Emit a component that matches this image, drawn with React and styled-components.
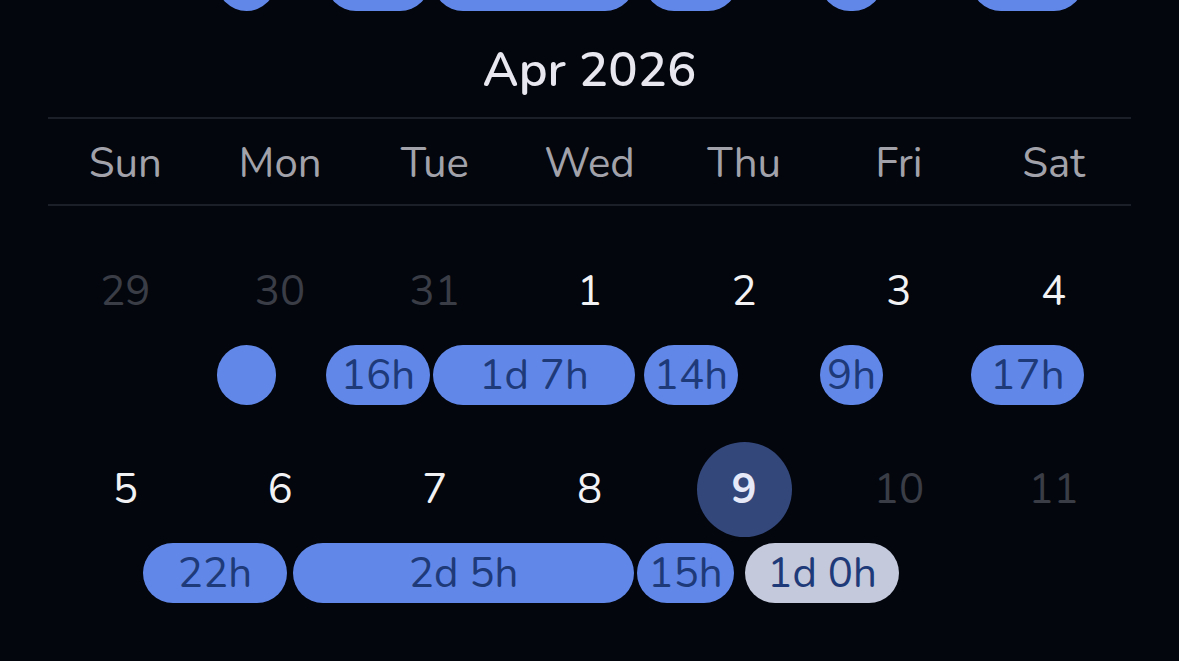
import styled, { createGlobalStyle } from 'styled-components';

const GlobalStyle = createGlobalStyle`
  html, body {
    margin: 0;
    padding: 0;
    background: #03060d;
    overflow: hidden;
  }
  body {
    font-family: "Nunito", "Lato", "Noto Sans", sans-serif;
  }
`;

const weekdays = ['Sun', 'Mon', 'Tue', 'Wed', 'Thu', 'Fri', 'Sat'];

// bar positions are in day units from the start of the week
// the last week of March only peeks in at the top, labels are out of view
const prevBars = [
  { start: 1.092, end: 1.474 },
  { start: 1.797, end: 2.469 },
  { start: 2.489, end: 3.794 },
  { start: 3.852, end: 4.46 },
  { start: 4.99, end: 5.397 },
  { start: 5.966, end: 6.696 },
];

const weeks = [
  {
    days: [
      { n: 29, faded: true },
      { n: 30, faded: true },
      { n: 31, faded: true },
      { n: 1 },
      { n: 2 },
      { n: 3 },
      { n: 4 },
    ],
    bars: [
      { start: 1.092, end: 1.474, label: '' },
      { start: 1.797, end: 2.469, label: '16h' },
      { start: 2.489, end: 3.794, label: '1d 7h' },
      { start: 3.852, end: 4.46, label: '14h' },
      { start: 4.99, end: 5.397, label: '9h' },
      { start: 5.966, end: 6.696, label: '17h' },
    ],
  },
  {
    days: [
      { n: 5 },
      { n: 6 },
      { n: 7 },
      { n: 8 },
      { n: 9, selected: true },
      { n: 10, faded: true },
      { n: 11, faded: true },
    ],
    bars: [
      { start: 0.614, end: 1.545, label: '22h' },
      { start: 1.584, end: 3.788, label: '2d 5h' },
      { start: 3.807, end: 4.434, label: '15h' },
      { start: 4.505, end: 5.501, label: '1d 0h', current: true },
    ],
  },
];

function BarTrack({ bars, ...rest }) {
  return (
    <Track {...rest}>
      {bars.map((b, i) => (
        <Bar
          key={i}
          $current={b.current}
          style={{ left: `${(b.start / 7) * 100}%`, width: `${((b.end - b.start) / 7) * 100}%` }}
        >
          {b.label}
        </Bar>
      ))}
    </Track>
  );
}

function App() {
  return (
    <>
      <GlobalStyle />
      <Page>
        <PrevTrack bars={prevBars} />
        <Title>Apr 2026</Title>
        <Divider $gap={17} />
        <WeekdayRow>
          {weekdays.map((d) => (
            <Weekday key={d}>{d}</Weekday>
          ))}
        </WeekdayRow>
        <Divider />
        <Weeks>
          {weeks.map((w, i) => (
            <Week key={i}>
              <DayRow>
                {w.days.map((d) => (
                  <DayCell key={d.n}>
                    <DayNum $faded={d.faded} $selected={d.selected}>
                      {d.n}
                    </DayNum>
                  </DayCell>
                ))}
              </DayRow>
              <BarTrack bars={w.bars} />
            </Week>
          ))}
        </Weeks>
      </Page>
    </>
  );
}

const Page = styled.div`
  display: flex;
  flex-direction: column;
  padding: 0 48px;
  height: 661px;
  box-sizing: border-box;
`;

const Track = styled.div`
  position: relative;
  height: 60px;
`;

const PrevTrack = styled(BarTrack)`
  margin-top: -49px;
  flex-shrink: 0;
`;

const Bar = styled.div`
  position: absolute;
  top: 0;
  height: 60px;
  border-radius: 30px;
  background: ${(p) => (p.$current ? '#c4c9db' : '#6188e9')};
  color: #1f3a78;
  display: flex;
  align-items: center;
  justify-content: center;
  font-size: 42px;
  white-space: nowrap;
  overflow: hidden;
`;

const Title = styled.h1`
  margin: 29px 0 0;
  height: 60px;
  line-height: 60px;
  text-align: center;
  font-size: 49px;
  font-weight: 600;
  color: #e8e6ee;
`;

const Divider = styled.div`
  height: 2px;
  margin-top: ${(p) => p.$gap || 0}px;
  background: #1b1f28;
  flex-shrink: 0;
`;

const WeekdayRow = styled.div`
  display: grid;
  grid-template-columns: repeat(7, 1fr);
  height: 85px;
  align-items: center;
`;

const Weekday = styled.div`
  text-align: center;
  font-size: 42px;
  color: #a2a2aa;
  padding-top: 3px;
`;

const Weeks = styled.div`
  display: flex;
  flex-direction: column;
  gap: 36px;
  padding-top: 37px;
`;

const Week = styled.div`
  display: flex;
  flex-direction: column;
  gap: 6px;
`;

const DayRow = styled.div`
  display: grid;
  grid-template-columns: repeat(7, 1fr);
  height: 96px;
`;

const DayCell = styled.div`
  display: flex;
  align-items: center;
  justify-content: center;
`;

const DayNum = styled.div`
  width: 95px;
  height: 95px;
  border-radius: 50%;
  display: flex;
  align-items: center;
  justify-content: center;
  font-size: 42px;
  font-weight: ${(p) => (p.$selected ? 700 : 400)};
  color: ${(p) => (p.$faded ? '#3a3d46' : p.$selected ? '#e6e9f8' : '#f2f2f4')};
  background: ${(p) => (p.$selected ? '#33477b' : 'transparent')};
`;

export default App;
